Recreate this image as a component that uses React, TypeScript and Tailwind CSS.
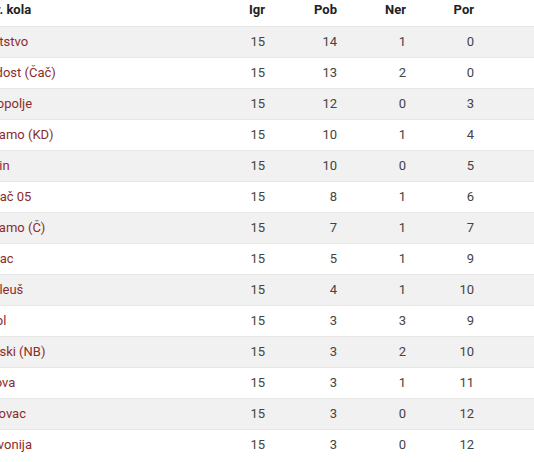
import React from 'react';

interface Row {
  team: string;
  played: number;
  won: number;
  drawn: number;
  lost: number;
  shift?: string;
}

const rows: Row[] = [
  { team: 'Bratstvo', played: 15, won: 14, drawn: 1, lost: 0 },
  { team: 'Mladost (Čač)', played: 15, won: 13, drawn: 2, lost: 0, shift: 'ml-[-6px]' },
  { team: 'Novopolje', played: 15, won: 12, drawn: 0, lost: 3, shift: 'ml-[-6px]' },
  { team: 'Dinamo (KD)', played: 15, won: 10, drawn: 1, lost: 4 },
  { team: 'Zlatin', played: 15, won: 10, drawn: 0, lost: 5, shift: 'ml-[-3px]' },
  { team: 'Borač 05', played: 15, won: 8, drawn: 1, lost: 6 },
  { team: 'Dinamo (Č)', played: 15, won: 7, drawn: 1, lost: 7 },
  { team: 'Borac', played: 15, won: 5, drawn: 1, lost: 9 },
  { team: 'Preleuš', played: 15, won: 4, drawn: 1, lost: 10 },
  { team: 'Sokol', played: 15, won: 3, drawn: 3, lost: 9, shift: 'ml-[-6px]' },
  { team: 'Srpski (NB)', played: 15, won: 3, drawn: 2, lost: 10 },
  { team: 'Takova', played: 15, won: 3, drawn: 1, lost: 11, shift: 'ml-[-6px]' },
  { team: 'Turovac', played: 15, won: 3, drawn: 0, lost: 12 },
  { team: 'Slavonija', played: 15, won: 3, drawn: 0, lost: 12 },
];

// numeric columns are right aligned
const cols = 'grid grid-cols-[230px_55px_72px_69px_68px_1fr]';

export default function App() {
  return (
    <div className="w-[534px] h-[462px] overflow-hidden bg-white font-['Roboto',sans-serif] text-[13px]">
      <div className="ml-[-20px] w-[574px]">
        {/* header */}
        <div className={`${cols} h-[26px] leading-[20px] font-bold text-[#222]`}>
          <div className="whitespace-nowrap">Rbr. kola</div>
          <div className="text-right">Igr</div>
          <div className="text-right">Pob</div>
          <div className="text-right">Ner</div>
          <div className="text-right">Por</div>
          <div />
        </div>

        {rows.map((r, i) => (
          <div
            key={r.team}
            className={`${cols} h-[31px] items-center border-t border-[#e6e6e6] text-[#444] ${
              i % 2 === 0 ? 'bg-[#f1f1f1]' : 'bg-white'
            }`}
          >
            <div className={`text-[#8b2c2c] whitespace-nowrap ${r.shift ?? ''}`}>{r.team}</div>
            <div className="text-right">{r.played}</div>
            <div className="text-right">{r.won}</div>
            <div className="text-right">{r.drawn}</div>
            <div className="text-right">{r.lost}</div>
            <div />
          </div>
        ))}
      </div>
    </div>
  );
}
